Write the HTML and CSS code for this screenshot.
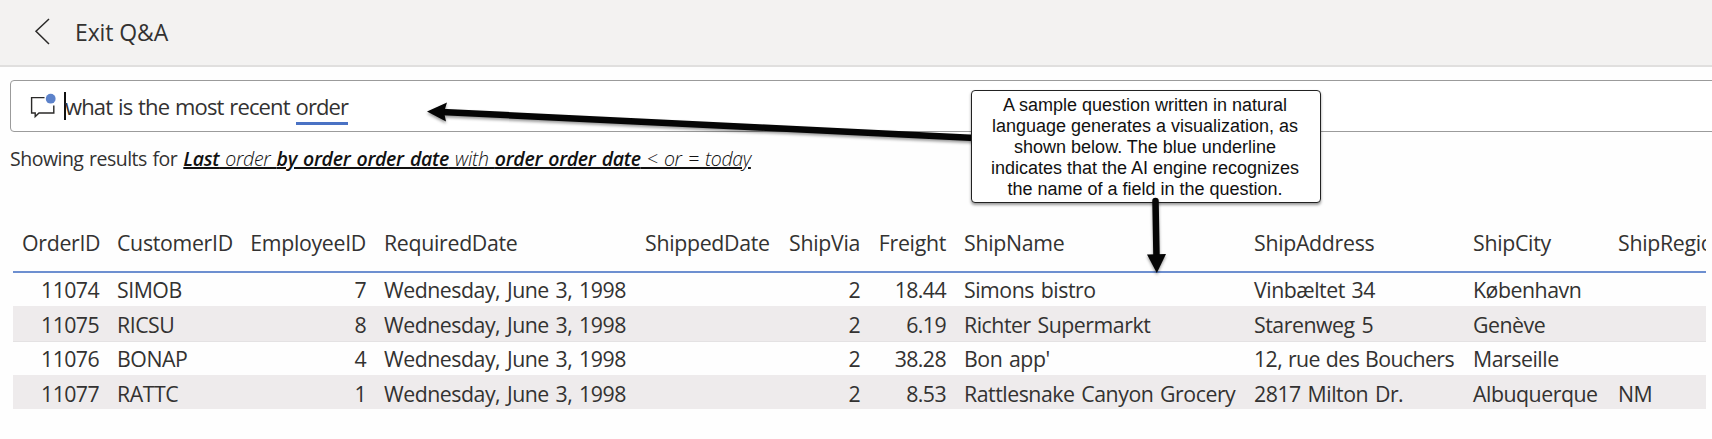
FILE: index.html
```
<!DOCTYPE html>
<html lang="en">
<head>
<meta charset="utf-8">
<title>Q&amp;A</title>
<link rel="stylesheet" href="styles.css">
</head>
<body>
<header class="topbar">
  <svg class="back" viewBox="0 0 16 27"><path d="M15 1 L2 13.3 L15 26"/></svg>
  <span class="exit">Exit Q&amp;A</span>
</header>
<main>
  <div class="search">
    <svg class="chat" viewBox="0 0 27 26"><path d="M15.5 4.6H2.6V20H6.2V23.6L10 20H24.8V12.5"/><circle cx="21.7" cy="5.7" r="4.9"/></svg>
    <span class="caret"></span>
    <span class="query">what is the most recent <span class="field">order</span></span>
  </div>
  <p class="results"><span class="lead">Showing results for</span> <span class="restate"><b>Last</b> order <b>by order order date</b> with <b>order order date</b> &lt; or = today</span></p>
  <div class="table-wrap">
    <table class="grid">
      <colgroup><col class="c1"><col class="c2"><col class="c3"><col class="c4"><col class="c5"><col class="c6"><col class="c7"><col class="c8"><col class="c9"><col class="c10"><col class="c11"></colgroup>
      <thead>
        <tr><th class="num">OrderID</th><th>CustomerID</th><th class="num">EmployeeID</th><th>RequiredDate</th><th>ShippedDate</th><th class="num">ShipVia</th><th class="num">Freight</th><th>ShipName</th><th>ShipAddress</th><th>ShipCity</th><th>ShipRegion</th></tr>
      </thead>
      <tbody>
        <tr><td class="num">11074</td><td>SIMOB</td><td class="num">7</td><td>Wednesday, June 3, 1998</td><td></td><td class="num">2</td><td class="num">18.44</td><td>Simons bistro</td><td>Vinbæltet 34</td><td>København</td><td></td></tr>
        <tr><td class="num">11075</td><td>RICSU</td><td class="num">8</td><td>Wednesday, June 3, 1998</td><td></td><td class="num">2</td><td class="num">6.19</td><td>Richter Supermarkt</td><td>Starenweg 5</td><td>Genève</td><td></td></tr>
        <tr><td class="num">11076</td><td>BONAP</td><td class="num">4</td><td>Wednesday, June 3, 1998</td><td></td><td class="num">2</td><td class="num">38.28</td><td>Bon app'</td><td class="address">12, rue des Bouchers</td><td>Marseille</td><td></td></tr>
        <tr><td class="num">11077</td><td>RATTC</td><td class="num">1</td><td>Wednesday, June 3, 1998</td><td></td><td class="num">2</td><td class="num">8.53</td><td>Rattlesnake Canyon Grocery</td><td>2817 Milton Dr.</td><td>Albuquerque</td><td>NM</td></tr>
      </tbody>
    </table>
  </div>
</main>
<svg class="arrow arrow-left" viewBox="420 90 560 60"><path class="shaft" d="M442 112 L975 138"/><path d="M427 111.5 L447 102.5 L444 112 L446 121.5Z"/></svg>
<div class="callout">A sample question written in natural<br>language generates a visualization, as<br>shown below. The blue underline<br>indicates that the AI engine recognizes<br>the name of a field in the question.</div>
<svg class="arrow arrow-down" viewBox="1140 190 40 90"><path class="shaft" d="M1155.5 201 L1156.5 257"/><path d="M1147 254.5 L1166 254 L1156.8 273Z"/></svg>
</body>
</html>
```
FILE: styles.css
```
* { box-sizing: border-box; }
html, body { margin: 0; height: 439px; overflow: hidden; }
body {
  position: relative;
  background: #fefefe;
  color: #333231;
  font-family: "Open Sans", "Noto Sans", sans-serif;
  font-size: 21.3px;
  font-weight: 400;
  letter-spacing: -0.47px;
}
.topbar {
  display: flex;
  align-items: center;
  gap: 25px;
  height: 67px;
  padding: 0 0 2px 34px;
  background: #f3f2f1;
  border-bottom: 2px solid #e0dfde;
}
.back { width: 16px; height: 27px; }
.back path { fill: none; stroke: #2b2a29; stroke-width: 1.5; }
.exit { font-size: 23px; letter-spacing: -0.1px; }
main { padding: 13px 0 0 10px; }
.search {
  display: flex;
  align-items: center;
  height: 52px;
  margin-right: -10px;
  padding-left: 18px;
  background: #fff;
  border: 1.5px solid #9b9b9b;
  border-radius: 4px;
}
.chat { width: 27px; height: 26px; }
.chat path { fill: none; stroke: #2b2a29; stroke-width: 1.4; }
.chat circle { fill: #5c82ca; }
.caret { width: 2px; height: 28px; margin-left: 8px; background: #111; }
.query { margin-left: -1px; font-size: 22px; line-height: 30px; letter-spacing: -0.87px; word-spacing: 1px; }
.field { padding-bottom: 1px; border-bottom: 3px solid #4a72c4; }
.results { margin: 11px 0 0; height: 32px; line-height: 32px; font-size: 19.5px; white-space: nowrap; }
.lead { letter-spacing: -0.5px; word-spacing: 1px; }
.restate { margin-left: 1.5px; font-style: italic; font-weight: 300; color: #111; letter-spacing: -0.33px; word-spacing: 1.5px; text-decoration: underline; text-decoration-thickness: 1.5px; }
.restate b { font-weight: 600; }
.table-wrap { width: 1693px; margin: 47px 0 0 3px; overflow: hidden; }
.grid { width: 1693px; table-layout: fixed; border-collapse: separate; border-spacing: 0; }
.c1 { width: 95px; } .c2 { width: 133px; } .c3 { width: 134px; } .c4 { width: 261px; }
.c5 { width: 142px; } .c6 { width: 91px; } .c7 { width: 86px; } .c8 { width: 290px; }
.c9 { width: 219px; } .c10 { width: 145px; } .c11 { width: 97px; }
th, td { padding: 0 9px; text-align: left; font-weight: inherit; white-space: nowrap; }
th {
  height: 51px;
  padding-top: 7px;
  vertical-align: top;
  line-height: 28px;
  letter-spacing: -0.3px;
  border-bottom: 2px solid #6d8fd0;
}
td { height: 33px; padding-top: 1px; line-height: 30px; word-spacing: 1.7px; }
tbody tr:nth-child(2) td { height: 36px; padding-top: 3px; border-bottom: 1px solid #e4e2e3; }
tbody tr:nth-child(4) td { height: 34px; padding-top: 4px; }
tbody tr:nth-child(even) { background: #eeebec; }
th.num, td.num { text-align: right; }
td.num { letter-spacing: -0.6px; }
td.address { letter-spacing: -0.6px; word-spacing: 1px; }
.callout {
  position: absolute;
  left: 971px;
  top: 90px;
  width: 350px;
  height: 113px;
  padding: 4px 2px 0 0;
  background: #fff;
  border: 1.5px solid #222;
  border-radius: 4px;
  box-shadow: 0 2px 3px rgba(0, 0, 0, .4);
  color: #111;
  font: 18px/21px "Liberation Sans", Arial, sans-serif;
  letter-spacing: 0;
  text-align: center;
}
.arrow { position: absolute; fill: #050505; filter: drop-shadow(0 2px 1.5px rgba(0, 0, 0, .4)); }
.arrow .shaft { stroke: #050505; stroke-width: 6.5; stroke-linecap: round; }
.arrow-left { left: 420px; top: 90px; width: 560px; height: 60px; }
.arrow-down { left: 1140px; top: 190px; width: 40px; height: 90px; }
```
